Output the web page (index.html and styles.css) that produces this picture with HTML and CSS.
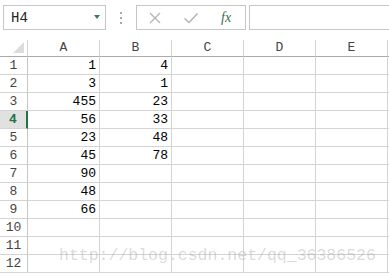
FILE: index.html
```html
<!DOCTYPE html>
<html lang="en">
<head>
    <meta charset="UTF-8">
    <meta name="viewport" content="width=device-width, initial-scale=1.0">
    <title>Sheet1</title>
    <link rel="stylesheet" href="styles.css">
</head>
<body>
    <div class="toolbar">
        <div class="namebox">
            <span class="name">H4</span>
            <span class="drop"></span>
        </div>
        <div class="dots"><i></i><i></i><i></i></div>
        <div class="btnbox">
            <svg class="icon" width="14" height="14" viewBox="0 0 14 14">
                <path d="M2 2 L12 12 M12 2 L2 12" stroke="#b4b4b4" stroke-width="1.3" fill="none"/>
            </svg>
            <svg class="icon" width="16" height="14" viewBox="0 0 16 14">
                <path d="M1.5 7.5 L6 11.5 L14.5 2.5" stroke="#b4b4b4" stroke-width="1.6" fill="none"/>
            </svg>
            <span class="fx">fx</span>
        </div>
        <div class="formula"></div>
    </div>

    <div class="sheet">
        <div class="corner"><span></span></div>
        <div class="colhead">A</div>
        <div class="colhead">B</div>
        <div class="colhead">C</div>
        <div class="colhead">D</div>
        <div class="colhead">E</div>
        <div class="colhead"></div>

        <div class="rowhead">1</div><div class="cell">1</div><div class="cell">4</div><div class="cell"></div><div class="cell"></div><div class="cell"></div><div class="cell"></div>
        <div class="rowhead">2</div><div class="cell">3</div><div class="cell">1</div><div class="cell"></div><div class="cell"></div><div class="cell"></div><div class="cell"></div>
        <div class="rowhead">3</div><div class="cell">455</div><div class="cell">23</div><div class="cell"></div><div class="cell"></div><div class="cell"></div><div class="cell"></div>
        <div class="rowhead sel">4</div><div class="cell">56</div><div class="cell">33</div><div class="cell"></div><div class="cell"></div><div class="cell"></div><div class="cell"></div>
        <div class="rowhead">5</div><div class="cell">23</div><div class="cell">48</div><div class="cell"></div><div class="cell"></div><div class="cell"></div><div class="cell"></div>
        <div class="rowhead">6</div><div class="cell">45</div><div class="cell">78</div><div class="cell"></div><div class="cell"></div><div class="cell"></div><div class="cell"></div>
        <div class="rowhead">7</div><div class="cell">90</div><div class="cell"></div><div class="cell"></div><div class="cell"></div><div class="cell"></div><div class="cell"></div>
        <div class="rowhead">8</div><div class="cell">48</div><div class="cell"></div><div class="cell"></div><div class="cell"></div><div class="cell"></div><div class="cell"></div>
        <div class="rowhead">9</div><div class="cell">66</div><div class="cell"></div><div class="cell"></div><div class="cell"></div><div class="cell"></div><div class="cell"></div>
        <div class="rowhead">10</div><div class="cell"></div><div class="cell"></div><div class="cell"></div><div class="cell"></div><div class="cell"></div><div class="cell"></div>
        <div class="rowhead">11</div><div class="cell"></div><div class="cell"></div><div class="cell"></div><div class="cell"></div><div class="cell"></div><div class="cell"></div>
        <div class="rowhead">12</div><div class="cell"></div><div class="cell"></div><div class="cell"></div><div class="cell"></div><div class="cell"></div><div class="cell"></div>
    </div>

    <div class="watermark">http://blog.csdn.net/qq_36386526</div>
</body>
</html>
```

FILE: styles.css
```css
body {
    margin: 0;
    padding: 0;
    width: 389px;
    height: 276px;
    overflow: hidden;
    background: #fff;
    font-family: "Liberation Mono", monospace;
    position: relative;
}
.toolbar {
    height: 40px;
    display: flex;
    align-items: flex-start;
    padding: 5px 0 0 3px;
    box-sizing: border-box;
}
.namebox {
    width: 103px;
    height: 25px;
    border: 1px solid #c6c6c6;
    box-sizing: border-box;
    display: flex;
    align-items: center;
    padding: 0 5px 0 7px;
}
.name {
    flex: 1;
    font-size: 14px;
    color: #222;
}
.drop {
    width: 0;
    height: 0;
    border-left: 3.5px solid transparent;
    border-right: 3.5px solid transparent;
    border-top: 4px solid #3f7a58;
    margin-top: -2px;
}
.dots {
    width: 30px;
    height: 25px;
    display: flex;
    flex-direction: column;
    align-items: center;
    justify-content: center;
    gap: 3px;
}
.dots i {
    display: block;
    width: 2px;
    height: 2px;
    background: #a8a8a8;
}
.btnbox {
    width: 110px;
    height: 25px;
    border: 1px solid #c6c6c6;
    box-sizing: border-box;
    display: flex;
    align-items: center;
    padding-left: 11px;
}
.icon {
    display: block;
}
.btnbox .icon + .icon {
    margin-left: 21px;
}
.fx {
    margin-left: 22px;
    font-family: "Liberation Serif", serif;
    font-style: italic;
    font-size: 14px;
    color: #3b6e4f;
}
.formula {
    flex: 1;
    margin-left: 3px;
    height: 25px;
    border: 1px solid #c6c6c6;
    border-right: none;
    box-sizing: border-box;
}
.sheet {
    display: grid;
    grid-template-columns: 28px repeat(5, 72px) 1fr;
    grid-template-rows: 17px repeat(12, 18px);
    width: 389px;
    font-size: 13px;
    color: #000;
}
.sheet > div {
    box-sizing: border-box;
    border-right: 1px solid #d4d4d4;
    border-bottom: 1px solid #d4d4d4;
    line-height: 17px;
    white-space: nowrap;
    overflow: hidden;
}
.sheet > .corner {
    display: flex;
    justify-content: flex-end;
    align-items: flex-end;
    padding: 0 3px 3px 0;
    border-bottom-color: #ababab;
}
.corner span {
    width: 11px;
    height: 11px;
    background: #dcdcdc;
    clip-path: polygon(100% 0, 100% 100%, 0 100%);
}
.sheet > .colhead {
    text-align: center;
    color: #444;
    line-height: 16px;
    border-bottom-color: #ababab;
}
.sheet > .rowhead {
    text-align: center;
    color: #444;
    border-right-color: #c6c6c6;
}
.sheet > .rowhead.sel {
    background: #e1e1e1;
    color: #217346;
    font-weight: bold;
    border-right: 2px solid #217346;
}
.cell {
    text-align: right;
    padding-right: 3px;
}
.watermark {
    position: absolute;
    left: 59px;
    top: 247px;
    font-family: "Liberation Mono", monospace;
    font-size: 16.5px;
    line-height: 18px;
    color: rgba(150, 150, 150, 0.35);
    white-space: nowrap;
}
```
